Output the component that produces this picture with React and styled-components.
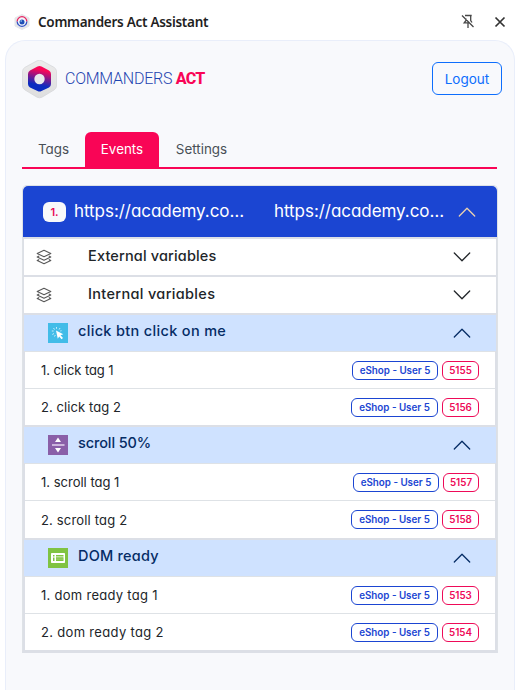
import React from "react";
import styled, { createGlobalStyle } from "styled-components";

const Global = createGlobalStyle`
  * { box-sizing: border-box; }
  body { margin: 0; background: #fff; overflow: hidden; font-family: Inter, "Open Sans", sans-serif; font-feature-settings: "cv11"; color: #212529; }
`;

const Window = styled.div`
  height: 690px;
  display: flex;
  flex-direction: column;
`;
const TitleBar = styled.header`
  height: 40px;
  display: flex;
  align-items: center;
  padding: 3px 9px 0 14px;
`;
const Title = styled.h1`
  margin: 0 0 0 8px;
  flex: 1;
  font: 600 13.5px/20px "Noto Sans", sans-serif;
  letter-spacing: -0.28px;
  color: #1f1f1f;
`;
const WindowIcon = styled.svg`
  display: block;
  margin-left: ${(p) => p.$gap || 0}px;
`;
const Panel = styled.main`
  flex: 1;
  margin: 0 1px 0 5px;
  padding: 19px 16px 0 16px;
  background: #f8f9fc;
  border: 1px solid #e9eefa;
  border-bottom: 0;
  border-radius: 20px 20px 0 0;
`;
const BrandRow = styled.div`
  display: flex;
  align-items: flex-start;
  height: 72px;
  margin: 0 -4px 0 -1px;
`;
const Wordmark = styled.div`
  flex: 1;
  margin: 7px 0 0 7px;
  font: 300 16px/24px Roboto, sans-serif;
  letter-spacing: -0.25px;
  color: #1f45b0;
  white-space: nowrap;
  b { font-weight: 800; color: #f90556; letter-spacing: -0.7px; }
`;
const LogoutButton = styled.button`
  width: 70px;
  height: 33px;
  margin-top: 2px;
  padding: 0;
  border: 1px solid #0d6efd;
  border-radius: 6px;
  background: transparent;
  color: #0d6efd;
  font: 400 13.5px/20px Inter, sans-serif;
  font-feature-settings: inherit;
`;
const Tabs = styled.nav`
  display: flex;
  height: 37px;
  margin-right: 1px;
  border-bottom: 2px solid #f90556;
`;
const Tab = styled.div`
  height: 35px;
  width: ${(p) => p.$width}px;
  text-align: center;
  font-size: 13.4px;
  line-height: 35px;
  border-radius: 6px 6px 0 0;
  color: ${(p) => (p.$active ? "#fff" : "#495057")};
  background: ${(p) => (p.$active ? "#f90556" : "transparent")};
`;
const Accordion = styled.section`
  margin-top: 16px;
  border: 1px solid #dee2e6;
  border-bottom: 3px solid #dcdfe6;
  border-radius: 5px 5px 0 0;
`;
const PageHeader = styled.div`
  height: 51px;
  display: flex;
  align-items: center;
  padding: 0 18px 0 20px;
  background: #1b45d2;
  border-radius: 5px 5px 0 0;
  color: #fff;
`;
const Index = styled.span`
  width: 23px;
  height: 20px;
  border-radius: 6px;
  background: #f8f9fa;
  color: #e80a55;
  text-align: center;
  font-size: 11px;
  font-weight: 600;
  line-height: 20px;
`;
const Url = styled.span`
  width: ${(p) => p.$width}px;
  margin: 0 0 2px 8px;
  font-size: 17px;
  letter-spacing: -0.05px;
  white-space: nowrap;
`;
const Body = styled.div`
  background: #dcdfe6;
  border: solid #dcdfe6;
  border-width: 0 1px;
`;
const VariableRow = styled.div`
  height: 38px;
  display: flex;
  align-items: center;
  padding: 0 25px 0 12px;
  border-top: 2px solid #dcdfe6;
  background: #fff;
`;
const Label = styled.span`
  flex: 1;
  margin: 0 0 ${(p) => p.$lift || 0}px ${(p) => p.$indent}px;
  font-size: 14.5px;
  font-weight: 500;
  letter-spacing: ${(p) => p.$track}px;
  color: ${(p) => p.$color || "#212529"};
`;
const EventHeader = styled.div`
  height: 38px;
  display: flex;
  align-items: center;
  padding: 0 25px 0 24px;
  border-top: 2px solid #dcdfe6;
  background: #cfe2ff;
`;
const TagRow = styled.div`
  height: ${(p) => p.$height}px;
  margin: 0 1px;
  display: flex;
  align-items: center;
  justify-content: flex-end;
  padding: 0 16px;
  border-top: 1px solid #dee2e6;
  background: #fff;
`;
const TagName = styled.span`
  flex: 1;
  font-size: 13px;
  letter-spacing: ${(p) => p.$track}px;
`;
const Badge = styled.span`
  width: ${(p) => p.$width}px;
  height: 19px;
  margin-left: 4px;
  border: 1px solid ${(p) => p.$color};
  border-radius: 6px;
  color: ${(p) => p.$color};
  text-align: center;
  font-size: 9.8px;
  font-weight: 600;
  line-height: 17px;
  white-space: nowrap;
`;

const Icon = styled.svg`
  display: block;
  flex: none;
`;

const Chevron = ({ up, color = "#212529" }) => (
  <Icon width="18" height="18" viewBox="0 0 18 18" fill="none" stroke={color} strokeWidth="1.3" strokeLinecap="round" strokeLinejoin="round">
    <path d={up ? "M1.3 13 9 5.3 16.7 13" : "M1.3 5 9 12.7 16.7 5"} />
  </Icon>
);

const Layers = () => (
  <Icon width="16" height="16" viewBox="0 0 16 16" fill="none" stroke="#595959" strokeWidth="1.1" strokeLinejoin="round">
    <path d="M8 1.200 14.800 4.500 8 7.800 1.200 4.500Z M3.200 7 1.200 8 8 11.300 14.800 8 12.800 7M3.200 10.400 1.200 11.400 8 14.700 14.800 11.400 12.800 10.400" />
  </Icon>
);

const Logo = () => (
  <Icon width="37" height="40" viewBox="0 1 37 40">
    <defs>
      <linearGradient id="hex" x1=".6" y1="0" x2=".4" y2="1">
        <stop offset=".15" stopColor="#fa0657" />
        <stop offset=".75" stopColor="#0b2bc0" />
      </linearGradient>
      <linearGradient id="shell" x1="0" y1="0" x2="0" y2="1">
        <stop offset="0" stopColor="#ececec" />
        <stop offset="1" stopColor="#dedede" />
      </linearGradient>
    </defs>
    <path d="M16 1.8Q18.500.6 21 1.8L33 8.300Q35.500 9.800 35.500 12.500V27Q35.500 29.500 33 31L21 38.200Q18.500 39.500 16 38.200L4 31Q1.500 29.500 1.500 27V12.500Q1.500 9.800 4 8.300Z" fill="url(#shell)" stroke="#d4d5d8" strokeWidth=".7" />
    <path d="M16.500 7.500Q18.500 6.400 20.500 7.500L28 11.500Q30 12.700 30 15V25Q30 27.300 28 28.500L20.500 32Q18.500 33 16.500 32L9 28.500Q7 27.300 7 25V15Q7 12.700 9 11.500Z" fill="url(#hex)" />
    <circle cx="18.500" cy="20" r="5.200" fill="#e9e9ec" />
  </Icon>
);

const MiniLogo = () => (
  <Icon width="16" height="18" viewBox="0 0 16 18">
    <path d="M8 1.500 15 5V13L8 16.500 1 13V5Z" fill="#e5e6e9" stroke="#e5e6e9" strokeLinejoin="round" />
    <circle cx="8" cy="9" r="4.700" fill="#f3f4fa" />
    <path d="M3.200 8.500A4.800 4.800 0 0 1 12.800 8.500" fill="none" stroke="#ea2461" strokeWidth="1.300" />
    <path d="M3.200 8.500A4.800 4.800 0 1 0 12.800 8.500" fill="none" stroke="#3454c4" strokeWidth="1.300" />
    <circle cx="8" cy="9" r="2.500" fill="#1d4eb5" />
    <circle cx="7.200" cy="8" r=".8" fill="#9fd0f2" />
  </Icon>
);

const EventIcon = ({ kind }) => (
  <Icon width="20" height="20" viewBox="0 0 20 20">
    {kind === "click" && (
      <>
        <rect width="20" height="20" fill="#42bce8" />
        <path d="M8 7.500 15.300 11.200 12.500 12.200 15 15 13.500 16.300 11.200 13.500 9.800 15.700Z" fill="#fff" />
        <path d="M8.500 4V5.800M5.500 5 6.500 6.500M3.800 8H5.600M4.300 11.500 6 10.500M6.500 13.500 7.300 12M12 5 11.200 6.500M13.500 7.700 12.300 8" stroke="#d3f1fc" strokeWidth=".9" />
      </>
    )}
    {kind === "scroll" && (
      <>
        <rect width="20" height="20" fill="#8a5fa8" />
        <path d="M10 2.500 13 7H7Z M10 17.500 13 13H7Z" fill="#fff" />
        <path d="M4 10H16.500" stroke="#d9c7e5" strokeWidth="1.700" />
      </>
    )}
    {kind === "dom" && (
      <>
        <rect width="20" height="20" fill="#80c342" />
        <rect x="3" y="5" width="14" height="10" rx=".7" fill="#fff" />
        <path d="M5 7H6.500V8.500H5ZM8 7H15.500V8.500H8ZM5 9.500H6.500V13H5ZM8 9.300H15.500V13H8Z" fill="#80c342" />
        <path d="M8 11.100H15.500" stroke="#b9e08f" strokeWidth=".6" />
      </>
    )}
  </Icon>
);

const variables = [
  { name: "External variables", track: 0.15 },
  { name: "Internal variables", track: 0.33 },
];

const events = [
  {
    kind: "click", name: "click btn click on me", track: 0.33,
    tags: [
      { name: "1. click tag 1", id: "5155", track: -0.08, height: 37, width: 86 },
      { name: "2. click tag 2", id: "5156", track: 0.08, height: 37, width: 87 },
    ],
  },
  {
    kind: "scroll", name: "scroll 50%", track: -0.1,
    tags: [
      { name: "1. scroll tag 1", id: "5157", track: 0, height: 37, width: 86, idWidth: 36 },
      { name: "2. scroll tag 2", id: "5158", track: 0.17, height: 38, width: 87 },
    ],
  },
  {
    kind: "dom", name: "DOM ready", track: 0.2,
    tags: [
      { name: "1. dom ready tag 1", id: "5153", track: 0.28, height: 37, width: 87 },
      { name: "2. dom ready tag 2", id: "5154", track: 0.32, height: 37, width: 87 },
    ],
  },
];

export default function App() {
  return (
    <Window>
      <Global />
      <TitleBar>
        <MiniLogo />
        <Title>Commanders Act Assistant</Title>
        <WindowIcon width="14" height="15" viewBox="0 0 14 15" fill="none" stroke="#474747" strokeWidth="1.300">
          <path d="M1 1.500 12.500 13M4 1.500H10.700M9.700 1.500V6.500L11 8.500M5 4.500V6.500L3.200 8.800H8M7 8.800V14" />
        </WindowIcon>
        <WindowIcon $gap={18} width="14" height="14" viewBox="0 0 14 14" stroke="#333" strokeWidth="1.700">
          <path d="M2.500 2.500 11.500 11.500M11.500 2.500 2.500 11.500" />
        </WindowIcon>
      </TitleBar>
      <Panel>
        <BrandRow>
          <Logo />
          <Wordmark>COMMANDERS <b>ACT</b></Wordmark>
          <LogoutButton>Logout</LogoutButton>
        </BrandRow>
        <Tabs>
          <Tab $width={63}>Tags</Tab>
          <Tab $width={74} $active>Events</Tab>
          <Tab $width={85}>Settings</Tab>
        </Tabs>
        <Accordion>
          <PageHeader>
            <Index>1.</Index>
            <Url $width={192}>https://academy.co…</Url>
            <Url $width={184}>https://academy.co…</Url>
            <Chevron up color="#ecd2ae" />
          </PageHeader>
          <Body>
            {variables.map(({ name, track }) => (
              <VariableRow key={name}>
                <Layers />
                <Label $indent={36} $lift={3} $track={track}>{name}</Label>
                <Chevron />
              </VariableRow>
            ))}
            {events.map((event) => (
              <React.Fragment key={event.kind}>
                <EventHeader>
                  <EventIcon kind={event.kind} />
                  <Label $indent={10} $lift={5} $track={event.track} $color="#052c65">{event.name}</Label>
                  <Chevron up color="#052c65" />
                </EventHeader>
                {event.tags.map((tag) => (
                  <TagRow key={tag.id} $height={tag.height}>
                    <TagName $track={tag.track}>{tag.name}</TagName>
                    <Badge $color="#1b45d2" $width={tag.width}>eShop - User 5</Badge>
                    <Badge $color="#ee0a58" $width={tag.idWidth || 37}>{tag.id}</Badge>
                  </TagRow>
                ))}
              </React.Fragment>
            ))}
          </Body>
        </Accordion>
      </Panel>
    </Window>
  );
}
